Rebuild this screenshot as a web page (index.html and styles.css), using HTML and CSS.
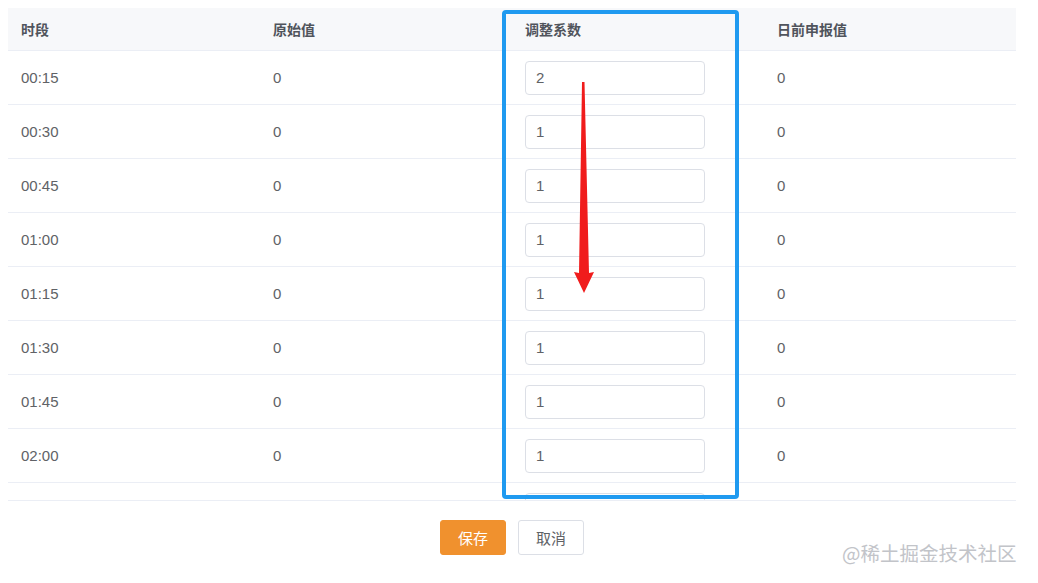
FILE: index.html
```html
<!DOCTYPE html>
<html lang="zh">
<head>
<meta charset="utf-8">
<link rel="stylesheet" href="styles.css">
</head>
<body>
<div class="page">
  <div class="table">
    <div class="thead">
      <div class="th">时段</div>
      <div class="th">原始值</div>
      <div class="th">调整系数</div>
      <div class="th">日前申报值</div>
    </div>
    <div class="tbody">
      <div class="tr"><div class="td">00:15</div><div class="td">0</div><div class="td"><div class="input">2</div></div><div class="td">0</div></div>
      <div class="tr"><div class="td">00:30</div><div class="td">0</div><div class="td"><div class="input">1</div></div><div class="td">0</div></div>
      <div class="tr"><div class="td">00:45</div><div class="td">0</div><div class="td"><div class="input">1</div></div><div class="td">0</div></div>
      <div class="tr"><div class="td">01:00</div><div class="td">0</div><div class="td"><div class="input">1</div></div><div class="td">0</div></div>
      <div class="tr"><div class="td">01:15</div><div class="td">0</div><div class="td"><div class="input">1</div></div><div class="td">0</div></div>
      <div class="tr"><div class="td">01:30</div><div class="td">0</div><div class="td"><div class="input">1</div></div><div class="td">0</div></div>
      <div class="tr"><div class="td">01:45</div><div class="td">0</div><div class="td"><div class="input">1</div></div><div class="td">0</div></div>
      <div class="tr"><div class="td">02:00</div><div class="td">0</div><div class="td"><div class="input">1</div></div><div class="td">0</div></div>
      <div class="tr"><div class="td"></div><div class="td"></div><div class="td"><div class="input"></div></div><div class="td"></div></div>
    </div>
  </div>
  <div class="footer">
    <button class="btn btn-primary">保存</button>
    <button class="btn">取消</button>
  </div>
  <div class="highlight"></div>
  <svg class="arrow" width="30" height="220" viewBox="0 0 30 220">
    <polygon points="12,0 14.5,0 19,191 24,190 14,211 4,190 9,191" fill="#f01c1c"/>
  </svg>
  <div class="watermark">@稀土掘金技术社区</div>
</div>
</body>
</html>
```
FILE: styles.css
```css
* { box-sizing: border-box; }
html, body { margin: 0; padding: 0; background: #fff; }
body {
  font-family: "Liberation Sans", Arial, "Noto Sans CJK SC", sans-serif;
  font-size: 14px;
  color: #606266;
}
.page {
  position: relative;
  width: 1038px;
  height: 583px;
  padding: 8px;
}
.table { width: 1008px; }
.thead {
  display: grid;
  grid-template-columns: repeat(4, 252px);
  height: 43px;
  background: #f7f8fa;
  border-bottom: 1px solid #ebeef5;
}
.th {
  display: flex;
  align-items: center;
  padding-left: 13px;
  font-weight: bold;
  color: #50545c;
  font-size: 14px;
}
.tbody {
  height: 450px;
  overflow: hidden;
  border-bottom: 1px solid #ebeef5;
}
.tr {
  display: grid;
  grid-template-columns: repeat(4, 252px);
  height: 54px;
  border-bottom: 1px solid #ebeef5;
}
.td {
  display: flex;
  align-items: center;
  padding-left: 13px;
  font-size: 15px;
  color: #606266;
}
.input {
  width: 180px;
  height: 34px;
  border: 1px solid #dcdfe6;
  border-radius: 4px;
  display: flex;
  align-items: center;
  padding-left: 10px;
  font-size: 15px;
  color: #606266;
  background: #fff;
}
.footer {
  display: flex;
  justify-content: center;
  gap: 12px;
  margin-top: 19px;
  width: 1008px;
}
.btn {
  font-family: "Liberation Sans", Arial, "Noto Sans CJK SC", sans-serif;
  width: 66px;
  height: 35px;
  border: 1px solid #dcdfe6;
  border-radius: 3px;
  background: #fff;
  color: #606266;
  font-size: 15px;
  padding: 0;
}
.btn-primary {
  background: #f0912e;
  border-color: #f0912e;
  color: #fff;
}
.highlight {
  position: absolute;
  left: 502px;
  top: 10px;
  width: 237px;
  height: 489px;
  border: 4px solid #1f9af0;
  border-radius: 4px;
}
.arrow {
  position: absolute;
  left: 570px;
  top: 82px;
}
.watermark {
  position: absolute;
  left: 842px;
  top: 538px;
  font-family: "Noto Sans CJK SC", sans-serif;
  font-size: 19.5px;
  color: #c2c4c9;
}
```
